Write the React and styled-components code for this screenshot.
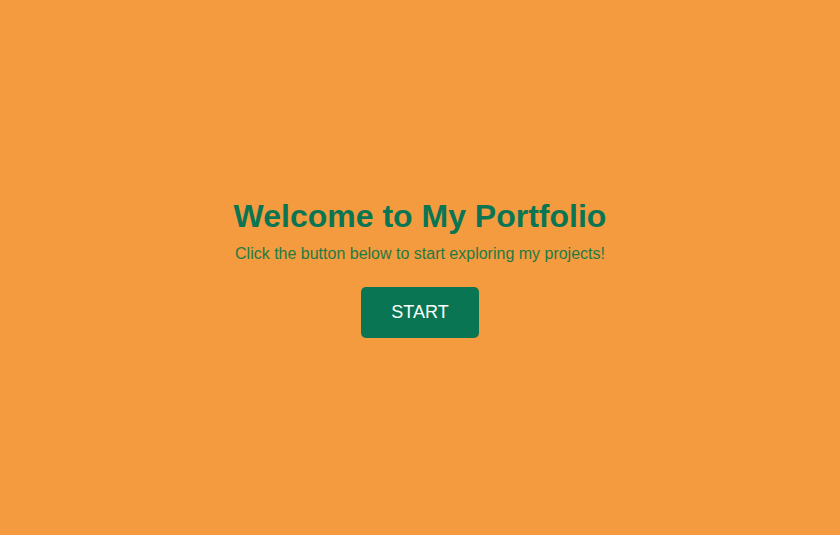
import React from "react";
import styled, { createGlobalStyle } from "styled-components";

const GlobalStyle = createGlobalStyle`
    html, body {
        margin: 0;
        padding: 0;
        background-color: #f49b3f;
        font-family: "Liberation Sans", Arial, sans-serif;
    }
`;

const App = () => {
    return (
        <>
            <GlobalStyle />
            <Container>
                <Title>Welcome to My Portfolio</Title>
                <Subtitle>Click the button below to start exploring my projects!</Subtitle>
                <StartButton>START</StartButton>
            </Container>
        </>
    );
};

const Container = styled.main`
    height: 100vh;
    display: flex;
    flex-direction: column;
    align-items: center;
    justify-content: center;
    text-align: center;
    color: #0a7553;
`;

const Title = styled.h1`
    margin: 0 0 10px;
    font-size: 32px;
    font-weight: bold;
`;

const Subtitle = styled.p`
    margin: 0 0 24px;
    font-size: 16px;
    color: #1e7a45;
`;

const StartButton = styled.button`
    width: 118px;
    height: 51px;
    border: none;
    border-radius: 5px;
    background-color: #0a7553;
    color: #ffffff;
    font-family: inherit;
    font-size: 18px;
    cursor: pointer;
`;

export default App;
